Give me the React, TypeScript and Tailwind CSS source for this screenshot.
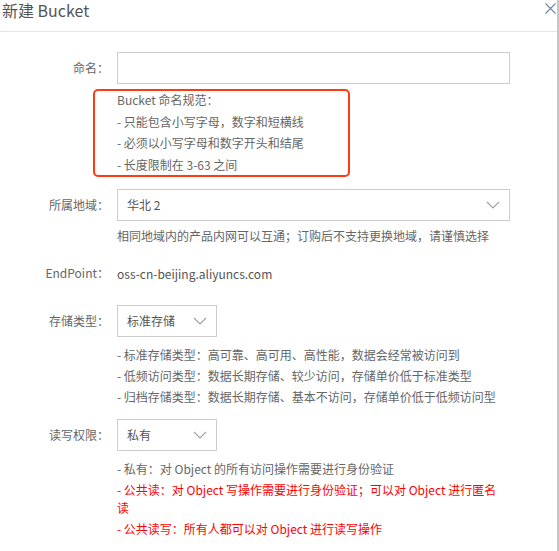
import { ReactNode } from 'react';

const Chevron = () => (
  <svg width="14" height="8" viewBox="0 0 14 8" fill="none">
    <path d="M1 1l6 6 6-6" stroke="#a0a0a0" strokeWidth="1.1" />
  </svg>
);

const Row = ({ label, children }: { label: string; children: ReactNode }) => (
  <div className="flex items-center">
    <div className="w-[109px] shrink-0 text-right text-[12px] text-[#666]">{label}</div>
    <div className="ml-[8px] flex-1">{children}</div>
  </div>
);

const Select = ({ value, wide }: { value: string; wide?: boolean }) => (
  <div
    className={`flex h-[32px] items-center justify-between border border-[#ccc] bg-white pl-[9px] pr-[9px] text-[12px] text-[#555] ${
      wide ? 'w-[393px]' : 'w-[100px]'
    }`}
  >
    <span>{value}</span>
    <Chevron />
  </div>
);

const Notes = ({ lines, className }: { lines: { text: string; red?: boolean }[]; className?: string }) => (
  <div className={`ml-[117px] flex w-[385px] flex-col text-[12px] leading-[18px] ${className ?? ''}`}>
    {lines.map((l) => (
      <p key={l.text} className={l.red ? 'text-[#f00]' : 'text-[#666]'}>
        {l.text}
      </p>
    ))}
  </div>
);

const App = () => {
  return (
    <div className="flex h-[551px] w-[559px] overflow-hidden bg-white font-['Noto_Sans_CJK_SC',sans-serif]">
      <div className="w-[557px]">
        <header className="flex h-[32px] items-start justify-between border-b border-[#e5e5e5] pl-[2px]">
          <h1 className="text-[16px] leading-[21px] text-[#555]">新建 Bucket</h1>
          <svg width="11" height="11" viewBox="0 0 11 11" className="mr-[1px] mt-[3px]">
            <path d="M0.5 0.5l10 10M10.5 0.5l-10 10" stroke="#6b87a8" strokeWidth="1.1" />
          </svg>
        </header>

        <div className="pt-[20px]">
          <Row label="命名：">
            <div className="h-[32px] w-[393px] border border-[#ccc]" />
          </Row>

          <div className="relative mt-[6px]">
            <div className="pointer-events-none absolute -top-[1px] left-[93px] h-[88px] w-[257px] rounded-[5px] border-2 border-[#ff3b14]" />
            <Notes
              className="gap-[3.5px] pt-[1px]"
              lines={[
                { text: 'Bucket 命名规范：' },
                { text: '- 只能包含小写字母，数字和短横线' },
                { text: '- 必须以小写字母和数字开头和结尾' },
                { text: '- 长度限制在 3-63 之间' },
              ]}
            />
          </div>

          <div className="mt-[15px]">
            <Row label="所属地域：">
              <Select value="华北 2" wide />
            </Row>
          </div>
          <p className="ml-[117px] mt-[6px] text-[12px] leading-[18px] text-[#666]">
            相同地域内的产品内网可以互通；订购后不支持更换地域，请谨慎选择
          </p>

          <div className="mt-[18px] leading-[18px]">
            <Row label="EndPoint：">
              <span className="text-[12px] text-[#555]">oss-cn-beijing.aliyuncs.com</span>
            </Row>
          </div>

          <div className="mt-[22px]">
            <Row label="存储类型：">
              <Select value="标准存储" />
            </Row>
          </div>
          <Notes
            className="mt-[9px] gap-[3px]"
            lines={[
              { text: '- 标准存储类型：高可靠、高可用、高性能，数据会经常被访问到' },
              { text: '- 低频访问类型：数据长期存储、较少访问，存储单价低于标准类型' },
              { text: '- 归档存储类型：数据长期存储、基本不访问，存储单价低于低频访问型' },
            ]}
          />

          <div className="mt-[13px]">
            <Row label="读写权限：">
              <Select value="私有" />
            </Row>
          </div>
          <Notes
            className="mt-[9px] gap-[3px]"
            lines={[
              { text: '- 私有：对 Object 的所有访问操作需要进行身份验证' },
              { text: '- 公共读：对 Object 写操作需要进行身份验证；可以对 Object 进行匿名读', red: true },
              { text: '- 公共读写：所有人都可以对 Object 进行读写操作', red: true },
            ]}
          />
        </div>
      </div>
      <div className="w-[2px] bg-[#c6c6c6]" />
    </div>
  );
};

export default App;
